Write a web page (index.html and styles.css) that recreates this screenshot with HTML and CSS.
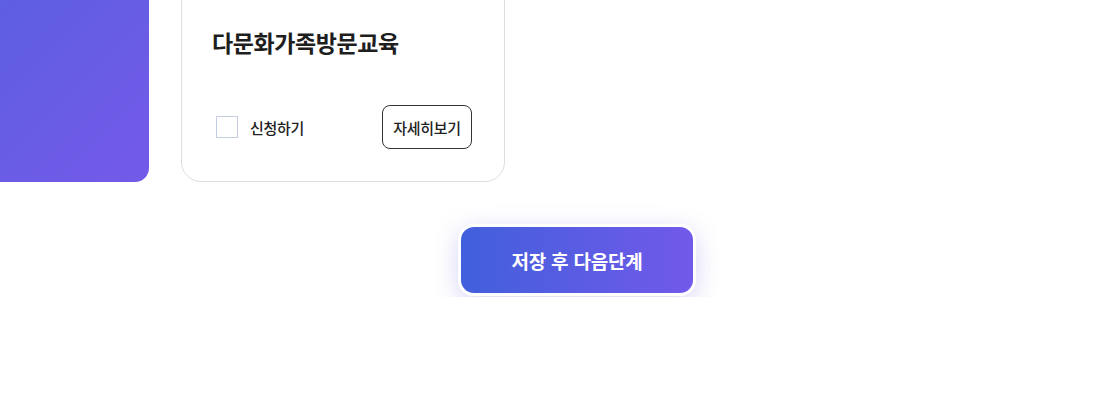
FILE: index.html
```html
<!DOCTYPE html>
<html lang="ko">
<head>
<meta charset="utf-8">
<link rel="stylesheet" href="styles.css">
</head>
<body>
<div class="page">
  <div class="row">
    <div class="banner"></div>
    <div class="card">
      <h3 class="card-title">다문화가족방문교육</h3>
      <div class="card-foot">
        <label class="check">
          <span class="box"></span>
          <span class="check-label">신청하기</span>
        </label>
        <button class="detail">자세히보기</button>
      </div>
    </div>
  </div>
  <div class="actions">
    <button class="save">저장 후 다음단계</button>
  </div>
</div>
</body>
</html>
```
FILE: styles.css
```css
* { box-sizing: border-box; }
html, body { margin: 0; padding: 0; background: #fff; }
body {
  font-family: "Noto Sans CJK KR", "Noto Sans", sans-serif;
  color: #222;
  width: 1108px;
  height: 405px;
  overflow: hidden;
}
.page { display: flex; flex-direction: column; }
.row {
  display: flex;
  gap: 32px;
  margin-top: -40px;
  margin-left: -60px;
  align-items: stretch;
}
.banner {
  width: 209px;
  height: 222px;
  border-radius: 0 0 14px 0;
  background: linear-gradient(135deg, #5760e0 0%, #745ae9 100%);
}
.card {
  width: 324px;
  height: 222px;
  border: 1px solid #dedede;
  border-radius: 20px;
  padding: 64px 32px 32px 30px;
  display: flex;
  flex-direction: column;
  justify-content: space-between;
  background: #fff;
}
.card-title {
  margin: 0;
  font-size: 23px;
  font-weight: 700;
  letter-spacing: -0.4px;
  line-height: 34px;
  color: #1e1e1e;
}
.card-foot {
  display: flex;
  align-items: center;
  justify-content: space-between;
}
.check {
  display: flex;
  align-items: center;
  gap: 12px;
  margin-left: 4px;
}
.box {
  width: 22px;
  height: 22px;
  border: 1px solid #c6cde0;
  background: #fff;
}
.check-label {
  font-size: 15px;
  font-weight: 500;
  color: #222;
  letter-spacing: -0.3px;
}
.detail {
  width: 90px;
  height: 44px;
  border: 1px solid #333;
  border-radius: 8px;
  background: #fff;
  font-family: inherit;
  font-size: 15px;
  font-weight: 500;
  color: #222;
  letter-spacing: -0.3px;
  padding: 0;
}
.actions {
  height: 115px;
  overflow: hidden;
  padding-top: 42px;
  padding-left: 458px;
  display: flex;
}
.save {
  width: 238px;
  height: 72px;
  border: 3px solid #fff;
  border-radius: 16px;
  background: linear-gradient(90deg, #4160db 0%, #7259ea 100%);
  box-shadow: 0 6px 24px rgba(110, 100, 220, 0.28);
  color: #fff;
  font-family: inherit;
  font-size: 19px;
  font-weight: 700;
  letter-spacing: -0.2px;
  padding: 0;
}
```
